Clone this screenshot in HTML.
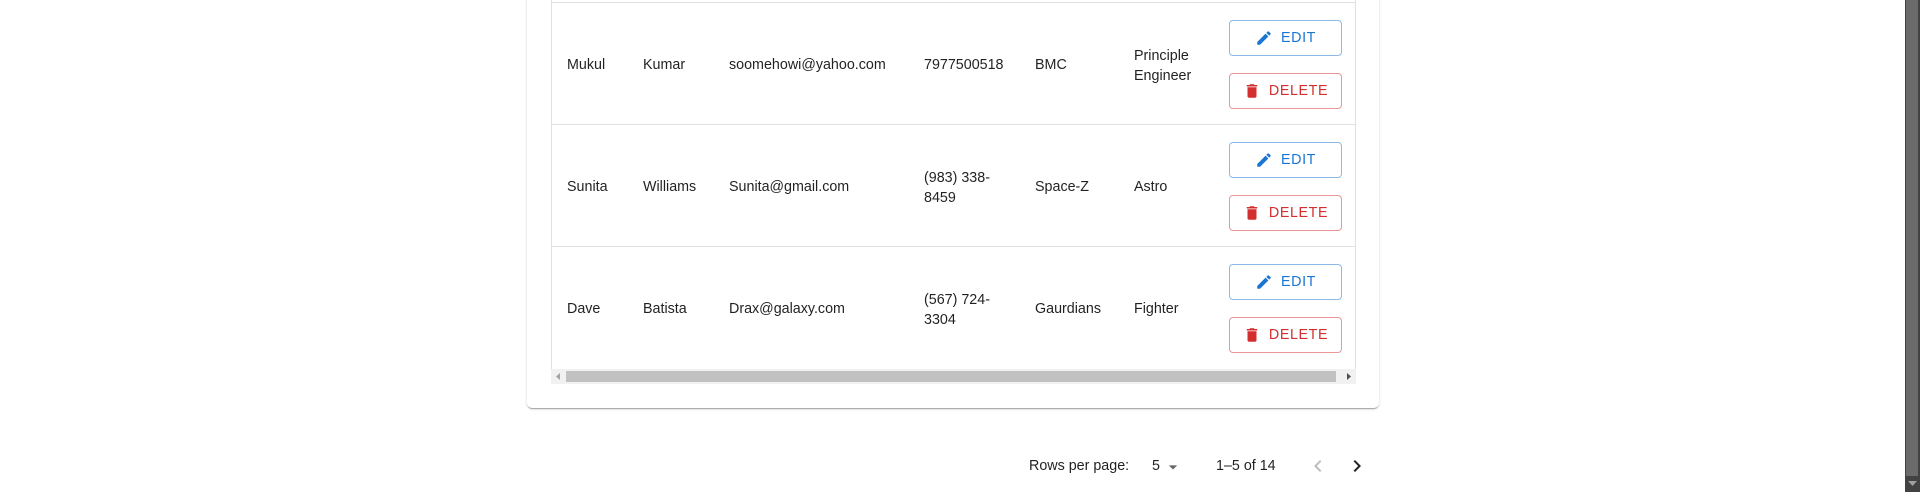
<!DOCTYPE html>
<html><head><meta charset="utf-8"><style>
*{box-sizing:border-box;margin:0;padding:0}
body{width:1920px;height:492px;background:#fff;font-family:"Liberation Sans",Roboto,sans-serif;color:rgba(0,0,0,.87);position:relative;overflow:hidden}
.card{position:absolute;left:527px;top:-10px;width:852px;height:418px;background:#fff;border-radius:5px;box-shadow:0 2px 1px -1px rgba(0,0,0,.2),0 1px 1px 0 rgba(0,0,0,.14),0 1px 3px 0 rgba(0,0,0,.12)}
.tbl{position:absolute;left:551px;top:0;width:805px;height:384px;border-left:1px solid #e0e0e0;border-right:1px solid #e0e0e0;border-bottom:1px solid #e0e0e0;background:#fff}
.row{position:absolute;left:0;width:803px;height:122px;border-top:1px solid #e0e0e0}
.c{position:absolute;font-size:14.3px;line-height:20px;top:50%;transform:translateY(-45%)}
.btn{position:absolute;left:677px;width:113px;height:36px;border-radius:4px;font-size:14.3px;letter-spacing:.6px;display:flex;align-items:center;justify-content:center;gap:8px}
.edit{border:1px solid rgba(25,118,210,.5);color:#1976d2}
.del{border:1px solid rgba(211,47,47,.5);color:#d32f2f}
.sb{position:absolute;left:551px;top:369px;width:805px;height:15px;background:#f1f1f1}
.sb .th{position:absolute;left:15px;top:2px;width:770px;height:11px;background:#c1c1c1}
.pg{position:absolute;top:456px;font-size:14.3px;line-height:20px}
.vs{position:absolute;left:1905px;top:0;width:15px;height:492px;background:#424242}
.vs .th{position:absolute;left:1px;top:0;width:12px;height:476px;background:#6b6b6b}
</style></head><body>
<div class="card"></div>
<div class="tbl">
 <div class="row" style="top:2px">
  <div class="c" style="left:15px">Mukul</div><div class="c" style="left:91px">Kumar</div><div class="c" style="left:177px">soomehowi@yahoo.com</div><div class="c" style="left:372px">7977500518</div><div class="c" style="left:483px">BMC</div><div class="c" style="left:582px">Principle<br>Engineer</div>
  <div class="btn edit" style="top:17px"><svg width="18" height="18" viewBox="0 0 24 24"><path fill="#1976d2" d="M3 17.25V21h3.75L17.81 9.94l-3.75-3.75L3 17.25zM20.71 7.04a1 1 0 000-1.41l-2.34-2.34a1 1 0 00-1.41 0l-1.83 1.83 3.75 3.75 1.83-1.83z"/></svg>EDIT</div>
  <div class="btn del" style="top:70px"><svg width="18" height="18" viewBox="0 0 24 24"><path fill="#d32f2f" d="M6 19c0 1.1.9 2 2 2h8c1.1 0 2-.9 2-2V7H6v12zM19 4h-3.5l-1-1h-5l-1 1H5v2h14V4z"/></svg>DELETE</div>
 </div>
 <div class="row" style="top:124px">
  <div class="c" style="left:15px">Sunita</div><div class="c" style="left:91px">Williams</div><div class="c" style="left:177px">Sunita@gmail.com</div><div class="c" style="left:372px">(983) 338-<br>8459</div><div class="c" style="left:483px">Space-Z</div><div class="c" style="left:582px">Astro</div>
  <div class="btn edit" style="top:17px"><svg width="18" height="18" viewBox="0 0 24 24"><path fill="#1976d2" d="M3 17.25V21h3.75L17.81 9.94l-3.75-3.75L3 17.25zM20.71 7.04a1 1 0 000-1.41l-2.34-2.34a1 1 0 00-1.41 0l-1.83 1.83 3.75 3.75 1.83-1.83z"/></svg>EDIT</div>
  <div class="btn del" style="top:70px"><svg width="18" height="18" viewBox="0 0 24 24"><path fill="#d32f2f" d="M6 19c0 1.1.9 2 2 2h8c1.1 0 2-.9 2-2V7H6v12zM19 4h-3.5l-1-1h-5l-1 1H5v2h14V4z"/></svg>DELETE</div>
 </div>
 <div class="row" style="top:246px">
  <div class="c" style="left:15px">Dave</div><div class="c" style="left:91px">Batista</div><div class="c" style="left:177px">Drax@galaxy.com</div><div class="c" style="left:372px">(567) 724-<br>3304</div><div class="c" style="left:483px">Gaurdians</div><div class="c" style="left:582px">Fighter</div>
  <div class="btn edit" style="top:17px"><svg width="18" height="18" viewBox="0 0 24 24"><path fill="#1976d2" d="M3 17.25V21h3.75L17.81 9.94l-3.75-3.75L3 17.25zM20.71 7.04a1 1 0 000-1.41l-2.34-2.34a1 1 0 00-1.41 0l-1.83 1.83 3.75 3.75 1.83-1.83z"/></svg>EDIT</div>
  <div class="btn del" style="top:70px"><svg width="18" height="18" viewBox="0 0 24 24"><path fill="#d32f2f" d="M6 19c0 1.1.9 2 2 2h8c1.1 0 2-.9 2-2V7H6v12zM19 4h-3.5l-1-1h-5l-1 1H5v2h14V4z"/></svg>DELETE</div>
 </div>
</div>
<div class="sb"><div class="th"></div>
 <svg style="position:absolute;left:4px;top:4px" width="6" height="7"><path d="M5 0L1 3.5 5 7z" fill="#a3a3a3"/></svg>
 <svg style="position:absolute;right:4px;top:4px" width="6" height="7"><path d="M1 0L5 3.5 1 7z" fill="#505050"/></svg>
</div>
<div class="pg" style="left:1029px">Rows per page:</div>
<div class="pg" style="left:1152px">5</div>
<svg style="position:absolute;left:1163px;top:457px" width="20" height="20" viewBox="0 0 24 24"><path d="M7 10l5 5 5-5z" fill="#666"/></svg>
<div class="pg" style="left:1216px">1–5 of 14</div>
<svg style="position:absolute;left:1306px;top:454px" width="24" height="24" viewBox="0 0 24 24"><path d="M15.41 7.41L14 6l-6 6 6 6 1.41-1.41L10.83 12z" fill="rgba(0,0,0,.26)"/></svg>
<svg style="position:absolute;left:1345px;top:454px" width="24" height="24" viewBox="0 0 24 24"><path d="M10 6L8.59 7.41 13.17 12l-4.58 4.59L10 18l6-6z" fill="rgba(0,0,0,.87)"/></svg>
<div class="vs"><div class="th"></div>
 <svg style="position:absolute;left:3px;top:481px" width="9" height="6"><path d="M0 0h9L4.5 5z" fill="#a0a0a0"/></svg>
</div>
</body></html>
